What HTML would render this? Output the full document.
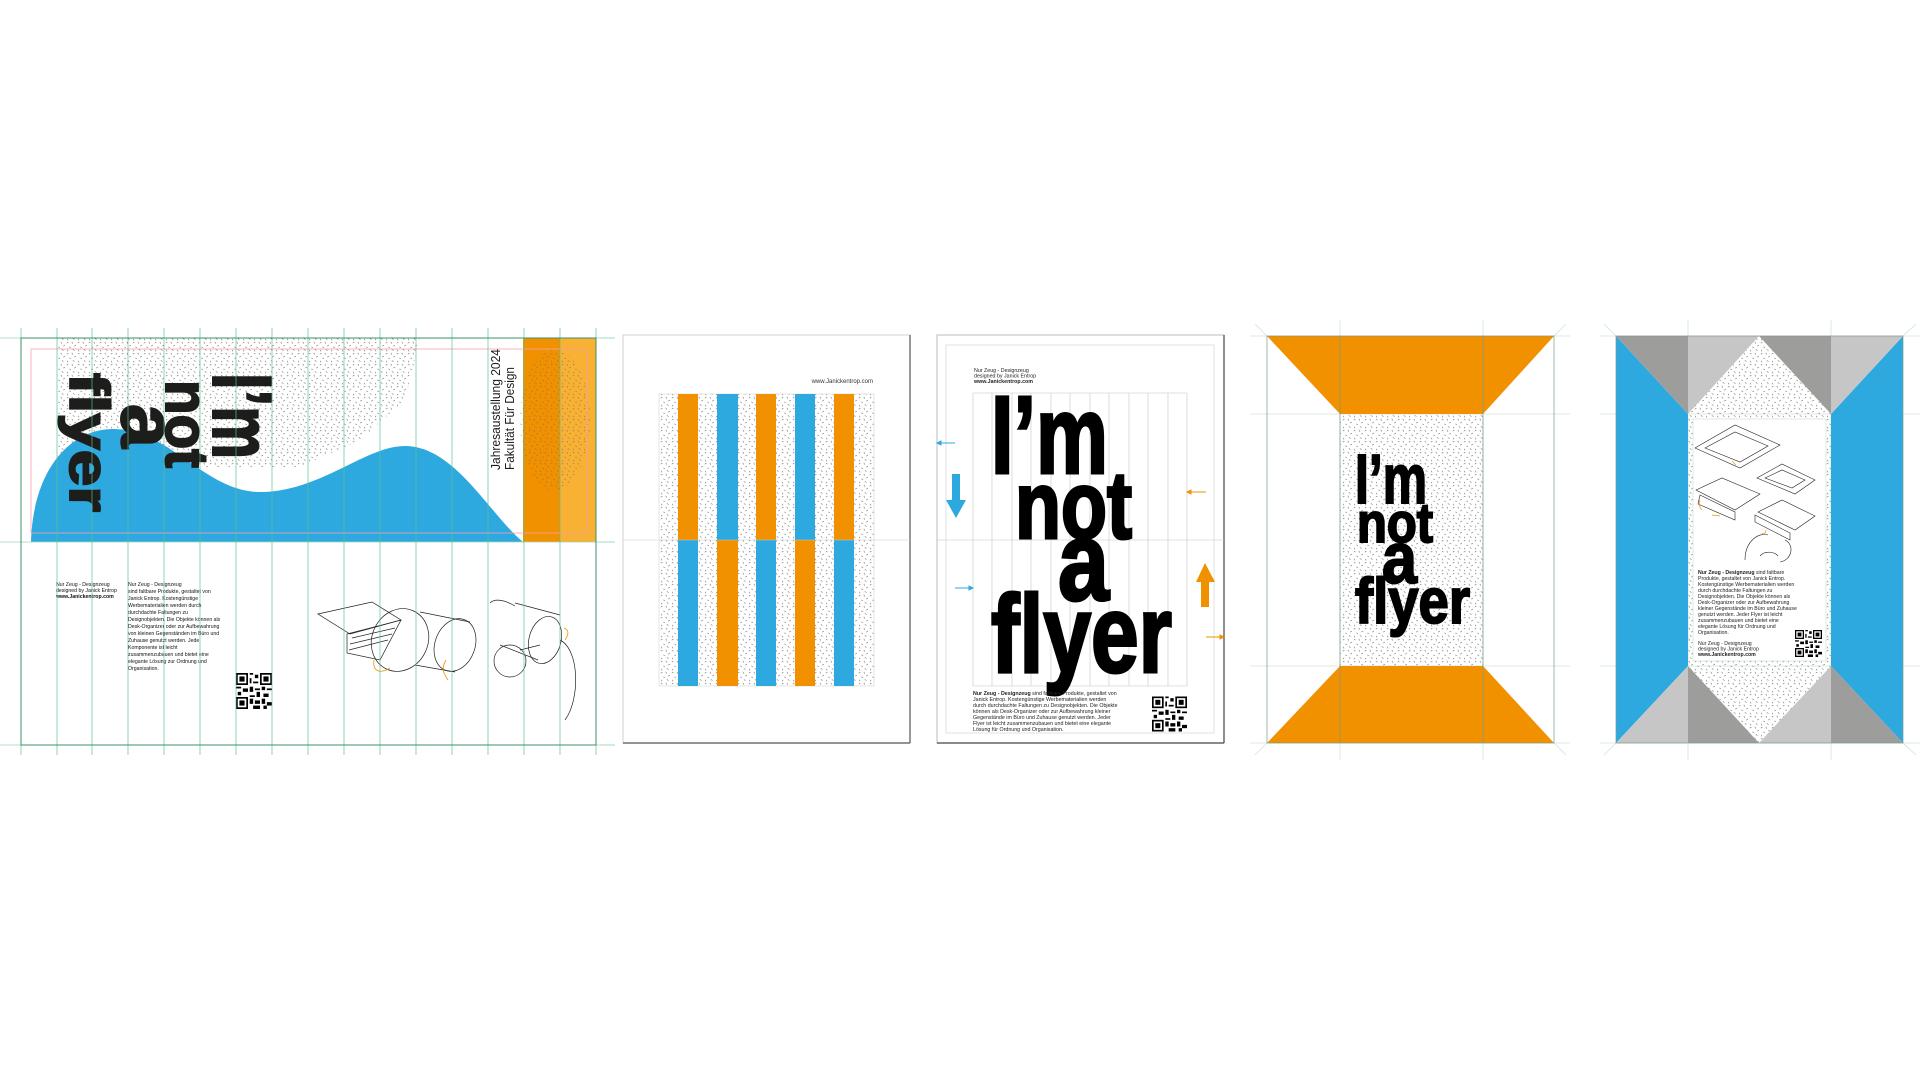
<!DOCTYPE html>
<html><head><meta charset="utf-8"><style>
html,body{margin:0;padding:0;background:#fff;width:1920px;height:1080px;overflow:hidden}
svg{display:block}
text{font-family:"Liberation Sans",sans-serif}
</style></head><body>
<svg width="1920" height="1080" viewBox="0 0 1920 1080" xmlns="http://www.w3.org/2000/svg">
<defs>
<pattern id="d" width="11" height="11" patternUnits="userSpaceOnUse">
<g stroke="#6a6a6a" stroke-width="0.6" stroke-linecap="round">
<line x1="1" y1="2" x2="2.2" y2="1.3"/><line x1="6" y1="1" x2="6.4" y2="2.4"/>
<line x1="3.5" y1="6" x2="4.8" y2="6.5"/><line x1="8.5" y1="5" x2="9.6" y2="4.2"/>
<line x1="1.5" y1="9" x2="1.9" y2="10.2"/><line x1="7" y1="8.6" x2="8.3" y2="9.4"/>
</g></pattern>
<symbol id="qr" viewBox="0 0 21 21">
<rect x="0" y="0" width="7" height="7" fill="#000"/><rect x="1" y="1" width="5" height="5" fill="#fff"/><rect x="2" y="2" width="3" height="3" fill="#000"/>
<rect x="14" y="0" width="7" height="7" fill="#000"/><rect x="15" y="1" width="5" height="5" fill="#fff"/><rect x="16" y="2" width="3" height="3" fill="#000"/>
<rect x="0" y="14" width="7" height="7" fill="#000"/><rect x="1" y="15" width="5" height="5" fill="#fff"/><rect x="2" y="16" width="3" height="3" fill="#000"/>
<g fill="#000"><rect x="8" y="0" width="2" height="1"/><rect x="11" y="1" width="2" height="2"/><rect x="8" y="3" width="1" height="3"/><rect x="10" y="5" width="3" height="1"/>
<rect x="0" y="8" width="3" height="1"/><rect x="4" y="9" width="3" height="2"/><rect x="8" y="8" width="2" height="3"/><rect x="11" y="9" width="3" height="1"/>
<rect x="15" y="8" width="2" height="2"/><rect x="18" y="9" width="3" height="1"/><rect x="1" y="11" width="2" height="2"/><rect x="12" y="11" width="2" height="3"/>
<rect x="16" y="12" width="3" height="2"/><rect x="8" y="13" width="3" height="1"/><rect x="8" y="15" width="2" height="3"/><rect x="11" y="16" width="3" height="2"/>
<rect x="15" y="15" width="2" height="3"/><rect x="18" y="17" width="3" height="2"/><rect x="10" y="19" width="4" height="2"/><rect x="16" y="19" width="2" height="2"/></g>
</symbol>
</defs>

<!-- ============ PANEL 1 ============ -->
<polygon points="57,338 420,338 405,400 360,440 300,467 57,467" fill="url(#d)"/>
<path d="M31,542 C33,470 70,429 113,429 C170,429 205,492 260,492 C320,492 365,446 405,446 C455,446 490,515 523,542 Z" fill="#2ea9e0"/>
<rect x="523" y="338" width="37" height="204" fill="#f29100"/>
<rect x="560" y="338" width="36" height="204" fill="#f8b133"/>
<ellipse cx="555" cy="420" rx="35" ry="70" fill="url(#d)" opacity="0.8"/>
<rect x="31" y="349" width="556" height="184" fill="none" stroke="#f2a3ab" stroke-width="0.8"/>
<g fill="#1d1d1b" stroke="#1d1d1b" stroke-width="2" font-weight="bold">
<text transform="translate(213,373) rotate(90)" font-size="84" textLength="86" lengthAdjust="spacingAndGlyphs">I’m</text>
<text transform="translate(166,380) rotate(90)" font-size="60" textLength="88" lengthAdjust="spacingAndGlyphs">not</text>
<text transform="translate(122,404) rotate(90)" font-size="78" textLength="44" lengthAdjust="spacingAndGlyphs">a</text>
<text transform="translate(70,373) rotate(90)" font-size="56" textLength="139" lengthAdjust="spacingAndGlyphs">flyer</text>
</g>
<g fill="#1d1d1b" font-size="13">
<text transform="translate(500,470) rotate(-90)" textLength="121" lengthAdjust="spacingAndGlyphs">Jahresaustellung 2024</text>
<text transform="translate(514,470) rotate(-90)" textLength="103" lengthAdjust="spacingAndGlyphs">Fakultät Für Design</text>
</g>
<g font-size="5.2" fill="#111">
<text x="56" y="586">Nur Zeug - Designzeug</text>
<text x="56" y="592">designed by Janick Entrop</text>
<text x="56" y="598" font-weight="bold">www.Janickentrop.com</text>
<text x="128" y="586">Nur Zeug - Designzeug</text>
<text x="128" y="593">sind faltbare Produkte, gestaltet von</text>
<text x="128" y="600">Janick Entrop. Kostengünstige</text>
<text x="128" y="607">Werbematerialien werden durch</text>
<text x="128" y="614">durchdachte Faltungen zu</text>
<text x="128" y="621">Designobjekten. Die Objekte können als</text>
<text x="128" y="628">Desk-Organizer oder zur Aufbewahrung</text>
<text x="128" y="635">von kleinen Gegenständen im Büro und</text>
<text x="128" y="642">Zuhause genutzt werden. Jede</text>
<text x="128" y="649">Komponente ist leicht</text>
<text x="128" y="656">zusammenzubauen und bietet eine</text>
<text x="128" y="663">elegante Lösung zur Ordnung und</text>
<text x="128" y="670">Organisation.</text>
</g>
<use href="#qr" x="236" y="673" width="36" height="36"/>
<g fill="none" stroke="#222" stroke-width="0.7">
<polygon points="318,614 372,602 401,620 350,634"/>
<polygon points="347,634 401,620 380,660 347,653"/>
<line x1="352" y1="638" x2="395" y2="628"/><line x1="350" y1="644" x2="392" y2="634"/><line x1="349" y1="650" x2="388" y2="640"/>
<ellipse cx="400" cy="640" rx="28" ry="32" transform="rotate(25 400 640)"/>
<ellipse cx="455" cy="645" rx="20" ry="27" transform="rotate(20 455 645)"/>
<line x1="420" y1="612" x2="470" y2="622"/><line x1="415" y1="665" x2="455" y2="672"/>
<ellipse cx="545" cy="640" rx="16" ry="24" transform="rotate(15 545 640)"/>
<line x1="515" y1="603" x2="560" y2="615"/><line x1="500" y1="645" x2="538" y2="660"/>
<circle cx="510" cy="661" r="16"/><line x1="520" y1="650" x2="540" y2="645"/>
<path d="M560,640 C580,650 580,700 565,720"/>
<path d="M490,603 C495,598 505,600 515,606"/>
</g>
<g fill="none" stroke="#f29100" stroke-width="0.8">
<path d="M374,660 C372,675 385,672 390,668"/><path d="M446,660 C440,670 445,675 448,680"/><path d="M564,628 C570,630 568,636 565,640"/>
</g>
<g stroke="#9ad6b4" stroke-width="0.8">
<line x1="0" y1="338" x2="615" y2="338"/><line x1="0" y1="542" x2="615" y2="542"/><line x1="0" y1="745" x2="615" y2="745"/>
</g>
<g stroke="#5cbf8a" stroke-width="0.8" opacity="0.85">
<line x1="21" y1="328" x2="21" y2="755"/><line x1="57" y1="328" x2="57" y2="755"/><line x1="92" y1="328" x2="92" y2="755"/><line x1="128" y1="328" x2="128" y2="755"/>
<line x1="164" y1="328" x2="164" y2="755"/><line x1="200" y1="328" x2="200" y2="755"/><line x1="236" y1="328" x2="236" y2="755"/><line x1="272" y1="328" x2="272" y2="755"/>
<line x1="308" y1="328" x2="308" y2="755"/><line x1="344" y1="328" x2="344" y2="755"/><line x1="380" y1="328" x2="380" y2="755"/><line x1="416" y1="328" x2="416" y2="755"/>
<line x1="452" y1="328" x2="452" y2="755"/><line x1="488" y1="328" x2="488" y2="755"/><line x1="524" y1="328" x2="524" y2="755"/><line x1="560" y1="328" x2="560" y2="755"/><line x1="596" y1="328" x2="596" y2="755"/>
</g>
<rect x="21" y="338" width="575" height="407" fill="none" stroke="#3e8f68" stroke-width="1"/>

<!-- ============ PANEL 2 ============ -->
<rect x="623" y="335" width="287" height="408" fill="#fff" stroke="#d0d0d0" stroke-width="1"/>
<line x1="910" y1="335" x2="910" y2="743" stroke="#555" stroke-width="1.2"/><line x1="623" y1="743" x2="910" y2="743" stroke="#555" stroke-width="1.2"/>
<rect x="659" y="394" width="215" height="292" fill="url(#d)"/>
<rect x="659" y="394" width="215" height="292" fill="none" stroke="#ccc" stroke-width="0.5"/>
<g>
<rect x="678" y="394" width="20" height="146" fill="#f29100"/><rect x="678" y="540" width="20" height="146" fill="#2ea9e0"/>
<rect x="717" y="394" width="21" height="146" fill="#2ea9e0"/><rect x="717" y="540" width="21" height="146" fill="#f29100"/>
<rect x="756" y="394" width="20" height="146" fill="#f29100"/><rect x="756" y="540" width="20" height="146" fill="#2ea9e0"/>
<rect x="795" y="394" width="20" height="146" fill="#2ea9e0"/><rect x="795" y="540" width="20" height="146" fill="#f29100"/>
<rect x="834" y="394" width="20" height="146" fill="#f29100"/><rect x="834" y="540" width="20" height="146" fill="#2ea9e0"/>
</g>
<line x1="623" y1="540" x2="910" y2="540" stroke="#ccc" stroke-width="0.6"/>
<text x="873" y="383" font-size="6" fill="#333" text-anchor="end">www.Janickentrop.com</text>
<g stroke="#9ad6b4" stroke-width="0.8"><line x1="600" y1="338" x2="615" y2="338"/><line x1="600" y1="542" x2="615" y2="542"/><line x1="600" y1="745" x2="615" y2="745"/></g>

<!-- ============ PANEL 3 ============ -->
<rect x="937" y="335" width="287" height="408" fill="#fff" stroke="#bbb" stroke-width="1"/>
<line x1="1224" y1="335" x2="1224" y2="743" stroke="#444" stroke-width="1.2"/><line x1="937" y1="743" x2="1224" y2="743" stroke="#444" stroke-width="1.2"/>
<rect x="946" y="345" width="268" height="388" fill="none" stroke="#d6d6d6" stroke-width="0.7"/>
<g stroke="#c4c4c4" stroke-width="0.6">
<line x1="973" y1="393" x2="973" y2="686"/><line x1="992" y1="393" x2="992" y2="686"/><line x1="1012" y1="393" x2="1012" y2="686"/><line x1="1031" y1="393" x2="1031" y2="686"/>
<line x1="1051" y1="393" x2="1051" y2="686"/><line x1="1070" y1="393" x2="1070" y2="686"/><line x1="1090" y1="393" x2="1090" y2="686"/><line x1="1109" y1="393" x2="1109" y2="686"/>
<line x1="1129" y1="393" x2="1129" y2="686"/><line x1="1148" y1="393" x2="1148" y2="686"/><line x1="1168" y1="393" x2="1168" y2="686"/><line x1="1187" y1="393" x2="1187" y2="686"/>
<line x1="973" y1="393" x2="1187" y2="393"/><line x1="973" y1="686" x2="1187" y2="686"/>
<line x1="937" y1="540" x2="1224" y2="540"/>
</g>
<g fill="#000" stroke="#000" stroke-width="3" font-weight="bold">
<text x="991" y="473" font-size="110" textLength="117" lengthAdjust="spacingAndGlyphs">I’m</text>
<text x="1015" y="538" font-size="96" textLength="117" lengthAdjust="spacingAndGlyphs">not</text>
<text x="1058" y="600" font-size="112" textLength="51" lengthAdjust="spacingAndGlyphs">a</text>
<text x="991" y="672" font-size="110" textLength="181" lengthAdjust="spacingAndGlyphs">flyer</text>
</g>
<g font-size="5.3" fill="#222">
<text x="974" y="372">Nur Zeug - Designzeug</text>
<text x="974" y="377.5">designed by Janick Entrop</text>
<text x="974" y="383" font-weight="bold">www.Janickentrop.com</text>
<text x="973" y="695"><tspan font-weight="bold">Nur Zeug - Designzeug</tspan> sind faltbare Produkte, gestaltet von</text>
<text x="973" y="701">Janick Entrop. Kostengünstige Werbematerialien werden</text>
<text x="973" y="707">durch durchdachte Faltungen zu Designobjekten. Die Objekte</text>
<text x="973" y="713">können als Desk-Organizer oder zur Aufbewahrung kleiner</text>
<text x="973" y="719">Gegenstände im Büro und Zuhause genutzt werden. Jeder</text>
<text x="973" y="725">Flyer ist leicht zusammenzubauen und bietet eine elegante</text>
<text x="973" y="731">Lösung für Ordnung und Organisation.</text>
</g>
<use href="#qr" x="1152" y="696" width="35" height="36"/>
<g stroke="#2ea9e0" stroke-width="1" fill="#2ea9e0">
<line x1="939" y1="443" x2="955" y2="443"/><polygon points="937,443 941,441 941,445"/>
<line x1="955" y1="588" x2="971" y2="588"/><polygon points="973,588 969,586 969,590"/>
</g>
<rect x="952" y="474" width="8" height="30" fill="#2ea9e0"/><polygon points="946,500 966,500 956,518" fill="#2ea9e0"/>
<g stroke="#f29100" stroke-width="1" fill="#f29100">
<line x1="1189" y1="492" x2="1206" y2="492"/><polygon points="1187,492 1191,490 1191,494"/>
<line x1="1206" y1="637" x2="1222" y2="637"/><polygon points="1224,637 1220,635 1220,639"/>
</g>
<rect x="1201" y="578" width="8" height="29" fill="#f29100"/><polygon points="1196,582 1215,582 1205,563" fill="#f29100"/>

<!-- ============ PANEL 4 ============ -->
<g stroke="#cfe3da" stroke-width="0.8">
<line x1="1250" y1="336" x2="1570" y2="336"/><line x1="1250" y1="414" x2="1570" y2="414"/><line x1="1250" y1="666" x2="1570" y2="666"/><line x1="1250" y1="743" x2="1570" y2="743"/>
<line x1="1340" y1="320" x2="1340" y2="760"/><line x1="1483" y1="320" x2="1483" y2="760"/>
<line x1="1255" y1="324" x2="1267" y2="336"/><line x1="1566" y1="324" x2="1554" y2="336"/><line x1="1255" y1="755" x2="1267" y2="743"/><line x1="1566" y1="755" x2="1554" y2="743"/>
</g>
<polygon points="1267,336 1554,336 1483,414 1340,414" fill="#f29100"/>
<polygon points="1340,666 1483,666 1554,743 1267,743" fill="#f29100"/>
<rect x="1340" y="414" width="143" height="252" fill="url(#d)"/>
<g stroke="#7a9a8a" stroke-width="0.7" fill="none"><rect x="1267" y="336" width="287" height="407"/>
<line x1="1340" y1="336" x2="1340" y2="743"/><line x1="1483" y1="336" x2="1483" y2="743"/></g>
<g fill="#000" stroke="#000" stroke-width="2" font-weight="bold">
<text x="1355" y="503" font-size="70" textLength="72" lengthAdjust="spacingAndGlyphs">I’m</text>
<text x="1357" y="542" font-size="56" textLength="76" lengthAdjust="spacingAndGlyphs">not</text>
<text x="1382" y="583" font-size="72" textLength="35" lengthAdjust="spacingAndGlyphs">a</text>
<text x="1355" y="623" font-size="64" textLength="115" lengthAdjust="spacingAndGlyphs">flyer</text>
</g>

<!-- ============ PANEL 5 ============ -->
<g stroke="#cfe3da" stroke-width="0.8">
<line x1="1600" y1="336" x2="1920" y2="336"/><line x1="1600" y1="414" x2="1920" y2="414"/><line x1="1600" y1="666" x2="1920" y2="666"/><line x1="1600" y1="743" x2="1920" y2="743"/>
<line x1="1688" y1="320" x2="1688" y2="760"/><line x1="1831" y1="320" x2="1831" y2="760"/>
<line x1="1604" y1="324" x2="1616" y2="336"/><line x1="1916" y1="324" x2="1903" y2="336"/><line x1="1604" y1="755" x2="1616" y2="743"/><line x1="1916" y1="755" x2="1903" y2="743"/>
</g>
<polygon points="1616,336 1688,414 1688,666 1616,743" fill="#2ea9e0"/>
<polygon points="1903,336 1831,414 1831,666 1903,743" fill="#2ea9e0"/>
<polygon points="1616,336 1688,336 1688,414" fill="#9d9d9c"/>
<polygon points="1688,336 1759,336 1688,414" fill="#c6c6c6"/>
<polygon points="1759,336 1831,336 1831,414" fill="#9d9d9c"/>
<polygon points="1831,336 1903,336 1831,414" fill="#c6c6c6"/>
<polygon points="1759,336 1831,414 1688,414" fill="url(#d)"/>
<polygon points="1616,743 1688,666 1688,743" fill="#c6c6c6"/>
<polygon points="1688,743 1759,743 1688,666" fill="#9d9d9c"/>
<polygon points="1759,743 1831,666 1831,743" fill="#c6c6c6"/>
<polygon points="1831,666 1903,743 1831,743" fill="#9d9d9c"/>
<polygon points="1759,743 1688,666 1831,666" fill="url(#d)"/>
<rect x="1688" y="414" width="143" height="252" fill="url(#d)"/>
<rect x="1693" y="419" width="133" height="242" fill="#fff" stroke="#cfe0d8" stroke-width="0.7"/>
<g fill="none" stroke="#222" stroke-width="0.6">
<polygon points="1695,448 1735,425 1780,445 1740,468"/><polygon points="1705,448 1735,432 1768,446 1740,462"/>
<polygon points="1757,478 1782,464 1815,480 1795,494"/><polygon points="1765,478 1782,470 1805,480 1792,488"/>
<polygon points="1696,490 1722,478 1760,494 1735,510"/><polygon points="1700,495 1735,512 1735,520 1698,504"/>
<polygon points="1758,512 1782,500 1815,516 1795,530"/><polygon points="1755,515 1790,533 1790,540 1755,522"/>
<path d="M1745,560 C1745,540 1760,532 1768,535 M1785,540 C1795,545 1792,560 1780,562 M1760,556 C1765,550 1775,552 1778,556"/>
</g>
<g fill="none" stroke="#f29100" stroke-width="0.7"><path d="M1732,461 l4,4 M1700,500 c-2,4 0,8 2,10 M1712,515 l8,1 M1762,533 c2,2 4,0 4,-3"/></g>
<g font-size="5.2" fill="#222">
<text x="1698" y="574"><tspan font-weight="bold">Nur Zeug - Designzeug</tspan> sind faltbare</text>
<text x="1698" y="580">Produkte, gestaltet von Janick Entrop.</text>
<text x="1698" y="586">Kostengünstige Werbematerialien werden</text>
<text x="1698" y="592">durch durchdachte Faltungen zu</text>
<text x="1698" y="598">Designobjekten. Die Objekte können als</text>
<text x="1698" y="604">Desk-Organizer oder zur Aufbewahrung</text>
<text x="1698" y="610">kleiner Gegenstände im Büro und Zuhause</text>
<text x="1698" y="616">genutzt werden. Jeder Flyer ist leicht</text>
<text x="1698" y="622">zusammenzubauen und bietet eine</text>
<text x="1698" y="628">elegante Lösung für Ordnung und</text>
<text x="1698" y="634">Organisation.</text>
<text x="1698" y="645">Nur Zeug - Designzeug</text>
<text x="1698" y="650.5">designed by Janick Entrop</text>
<text x="1698" y="656" font-weight="bold">www.Janickentrop.com</text>
</g>
<use href="#qr" x="1795" y="630" width="27" height="27"/>
<rect x="1616" y="336" width="287" height="407" fill="none" stroke="#7a9a8a" stroke-width="0.7"/>
</svg>
</body></html>
